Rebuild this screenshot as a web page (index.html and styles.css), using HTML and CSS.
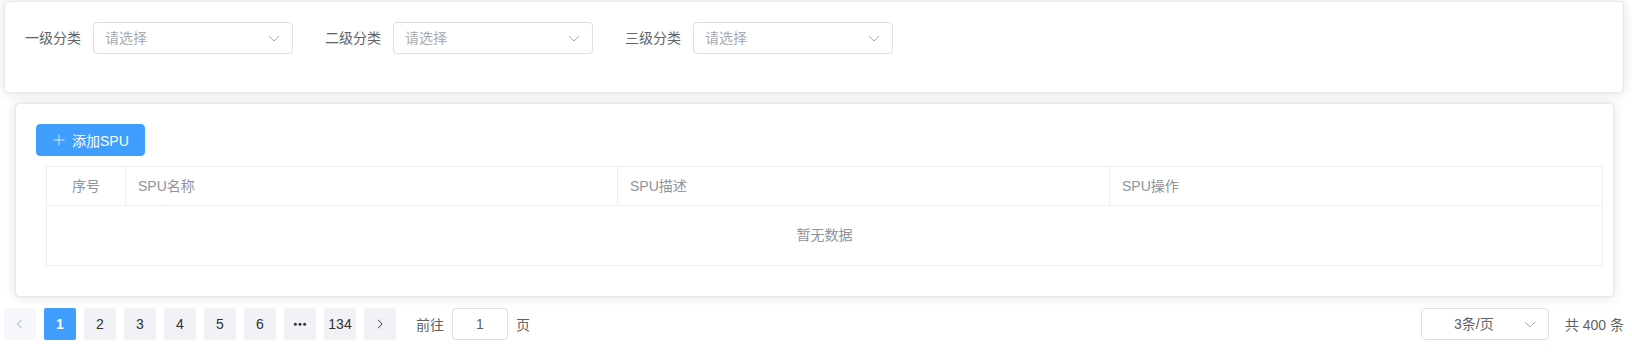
FILE: index.html
```
<!DOCTYPE html>
<html lang="zh-CN">
<head>
<meta charset="utf-8">
<title>SPU管理</title>
<link rel="stylesheet" href="styles.css">
</head>
<body>
<div class="page">
  <div class="card card-search">
    <div class="card-body">
      <form class="inline-form">
        <div class="form-item">
          <label class="form-label">一级分类</label>
          <div class="select">
            <span class="placeholder">请选择</span>
            <svg class="arrow" viewBox="0 0 14 14"><polyline points="2,5 7,10 12,5" fill="none" stroke="currentColor" stroke-width="1"/></svg>
          </div>
        </div>
        <div class="form-item">
          <label class="form-label">二级分类</label>
          <div class="select">
            <span class="placeholder">请选择</span>
            <svg class="arrow" viewBox="0 0 14 14"><polyline points="2,5 7,10 12,5" fill="none" stroke="currentColor" stroke-width="1"/></svg>
          </div>
        </div>
        <div class="form-item">
          <label class="form-label">三级分类</label>
          <div class="select">
            <span class="placeholder">请选择</span>
            <svg class="arrow" viewBox="0 0 14 14"><polyline points="2,5 7,10 12,5" fill="none" stroke="currentColor" stroke-width="1"/></svg>
          </div>
        </div>
      </form>
    </div>
  </div>

  <div class="card card-table">
    <div class="card-body">
      <button class="btn-primary" type="button">
        <svg class="btn-icon" viewBox="0 0 1024 1024"><path fill="currentColor" d="M480 480V128a32 32 0 0 1 64 0v352h352a32 32 0 1 1 0 64H544v352a32 32 0 1 1-64 0V544H128a32 32 0 0 1 0-64h352z"/></svg>
        <span>添加SPU</span>
      </button>
      <div class="table">
        <div class="thead">
          <div class="th th-center">序号</div>
          <div class="th">SPU名称</div>
          <div class="th">SPU描述</div>
          <div class="th">SPU操作</div>
        </div>
        <div class="empty">暂无数据</div>
      </div>
    </div>
  </div>

  <div class="pagination">
    <button class="pg-btn is-disabled" type="button">
      <svg class="pg-arrow" viewBox="0 0 1024 1024"><path fill="currentColor" d="M609.408 149.376 277.76 489.6a32 32 0 0 0 0 44.672l331.648 340.352a29.12 29.12 0 0 0 41.728 0 30.592 30.592 0 0 0 0-42.752L339.264 511.936l311.872-319.872a30.592 30.592 0 0 0 0-42.688 29.12 29.12 0 0 0-41.728 0z"/></svg>
    </button>
    <ul class="pager">
      <li class="pg-btn is-active">1</li>
      <li class="pg-btn">2</li>
      <li class="pg-btn">3</li>
      <li class="pg-btn">4</li>
      <li class="pg-btn">5</li>
      <li class="pg-btn">6</li>
      <li class="pg-btn">
        <svg class="pg-more" viewBox="0 0 1024 1024"><path fill="currentColor" d="M176 416a112 112 0 1 1 0 224 112 112 0 0 1 0-224zm336 0a112 112 0 1 1 0 224 112 112 0 0 1 0-224zm336 0a112 112 0 1 1 0 224 112 112 0 0 1 0-224z"/></svg>
      </li>
      <li class="pg-btn">134</li>
    </ul>
    <button class="pg-btn" type="button">
      <svg class="pg-arrow" viewBox="0 0 1024 1024"><path fill="currentColor" d="M340.864 149.312a30.592 30.592 0 0 0 0 42.752L652.736 512 340.864 831.872a30.592 30.592 0 0 0 0 42.752 29.12 29.12 0 0 0 41.728 0L714.24 534.336a32 32 0 0 0 0-44.672L382.592 149.376a29.12 29.12 0 0 0-41.728 0z"/></svg>
    </button>
    <div class="jump">
      <span>前往</span>
      <div class="jump-input">1</div>
      <span>页</span>
    </div>
    <div class="spacer"></div>
    <div class="sizes">
      <span class="sizes-text">3条/页</span>
      <svg class="arrow" viewBox="0 0 14 14"><polyline points="2,5 7,10 12,5" fill="none" stroke="currentColor" stroke-width="1"/></svg>
    </div>
    <span class="total">共 400 条</span>
  </div>
</div>
</body>
</html>
```

FILE: styles.css
```
* {
  box-sizing: border-box;
}

html, body {
  margin: 0;
  padding: 0;
  background: #ffffff;
}

body {
  font-family: "Liberation Sans", "Noto Sans CJK SC", sans-serif;
  font-size: 14px;
  color: #606266;
}

.page {
  width: 1624px;
}

.card {
  background: #ffffff;
  border: 1px solid #e4e7ed;
  border-radius: 4px;
  box-shadow: 0 0 12px rgba(0, 0, 0, 0.12);
  overflow: hidden;
}

.card-body {
  padding: 20px;
}

.card-search {
  margin: 1px 0 0 4px;
}

.card-table {
  margin: 10px 10px 0 15px;
}

/* form */
.inline-form {
  display: flex;
  margin: 0;
}

.form-item {
  display: flex;
  align-items: center;
  margin: 0 32px 18px 0;
  height: 32px;
}

.form-label {
  color: #606266;
  line-height: 32px;
  padding-right: 12px;
}

.select {
  width: 200px;
  height: 32px;
  display: flex;
  align-items: center;
  padding: 0 11px;
  border: 1px solid #dcdfe6;
  border-radius: 4px;
  background: #fff;
}

.placeholder {
  flex: 1;
  color: #a8abb2;
  line-height: 30px;
}

.arrow {
  width: 14px;
  height: 14px;
  color: #a8abb2;
  flex: none;
}

/* button */
.btn-primary {
  display: inline-flex;
  align-items: center;
  height: 32px;
  padding: 0 15px;
  border: 1px solid #409eff;
  border-radius: 4px;
  background: #409eff;
  color: #ffffff;
  font-family: inherit;
  font-size: 14px;
  font-weight: 400;
  cursor: pointer;
}

.btn-icon {
  width: 14px;
  height: 14px;
  margin-right: 6px;
  color: #d9ecff;
}

/* table */
.table {
  width: 100%;
  margin: 10px;
  border: 1px solid #ebeef5;
}

.thead {
  display: grid;
  grid-template-columns: 79px 1fr 1fr 1fr;
  border-bottom: 1px solid #ebeef5;
}

.th {
  padding: 8px 12px;
  line-height: 22px;
  color: #909399;
  font-weight: 400;
  border-right: 1px solid #ebeef5;
}

.th:last-child {
  border-right: none;
}

.th-center {
  text-align: center;
}

.empty {
  height: 59px;
  line-height: 59px;
  text-align: center;
  color: #909399;
}

/* pagination */
.pagination {
  display: flex;
  align-items: center;
  margin-top: 11px;
  height: 32px;
}

.pager {
  display: flex;
  list-style: none;
  margin: 0;
  padding: 0;
}

.pg-btn {
  width: 32px;
  height: 32px;
  margin: 0 4px;
  display: flex;
  align-items: center;
  justify-content: center;
  background: #f0f2f5;
  color: #303133;
  border: none;
  border-radius: 2px;
  font-family: inherit;
  font-size: 14px;
  padding: 0;
}

.pg-btn.is-active {
  background: #409eff;
  color: #ffffff;
  font-weight: 700;
}

.pg-btn.is-disabled {
  background: #f5f7fa;
  color: #a8abb2;
}

.pg-arrow {
  width: 12px;
  height: 12px;
}

.pg-more {
  width: 14px;
  height: 14px;
}

.jump {
  display: flex;
  align-items: center;
  margin-left: 16px;
  color: #606266;
}

.jump-input {
  width: 56px;
  height: 32px;
  margin: 0 8px;
  border: 1px solid #dcdfe6;
  border-radius: 4px;
  text-align: center;
  line-height: 30px;
  color: #606266;
}

.spacer {
  flex: 1;
}

.sizes {
  width: 128px;
  height: 32px;
  display: flex;
  align-items: center;
  padding: 0 11px;
  border: 1px solid #dcdfe6;
  border-radius: 4px;
}

.sizes-text {
  flex: 1;
  text-align: center;
  color: #606266;
  line-height: 30px;
  padding-right: 8px;
}

.total {
  margin-left: 16px;
  color: #606266;
  white-space: nowrap;
}
```
